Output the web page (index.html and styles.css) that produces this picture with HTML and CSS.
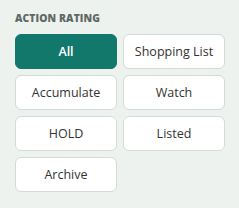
FILE: index.html
```html
<!DOCTYPE html>
<html>
<head>
<meta charset="utf-8">
<link rel="stylesheet" href="styles.css">
</head>
<body>
<div class="panel">
  <div class="title">ACTION RATING</div>
  <div class="grid">
    <button class="opt active">All</button>
    <button class="opt">Shopping List</button>
    <button class="opt">Accumulate</button>
    <button class="opt">Watch</button>
    <button class="opt">HOLD</button>
    <button class="opt">Listed</button>
    <button class="opt">Archive</button>
  </div>
</div>
</body>
</html>
```
FILE: styles.css
```css
html, body {
  margin: 0;
  padding: 0;
  background: #eef2ef;
}
.panel {
  padding: 13px 14px 0 15px;
  font-family: "Open Sans", "Noto Sans", sans-serif;
}
.title {
  font-size: 10.3px;
  font-weight: 800;
  color: #5d6963;
  letter-spacing: 0.1px;
  line-height: 11px;
  margin-bottom: 10px;
}
.grid {
  display: grid;
  grid-template-columns: 102px 102px;
  column-gap: 6px;
  row-gap: 6px;
}
.opt {
  height: 35px;
  box-sizing: border-box;
  border: 1px solid #d3dbd6;
  border-radius: 6px;
  background: #ffffff;
  color: #333333;
  font-family: "Open Sans", "Noto Sans", sans-serif;
  font-size: 12.5px;
  padding: 0;
  margin: 0;
}
.opt.active {
  background: #11786b;
  border-color: #11786b;
  color: #ffffff;
  font-weight: 600;
}
```
